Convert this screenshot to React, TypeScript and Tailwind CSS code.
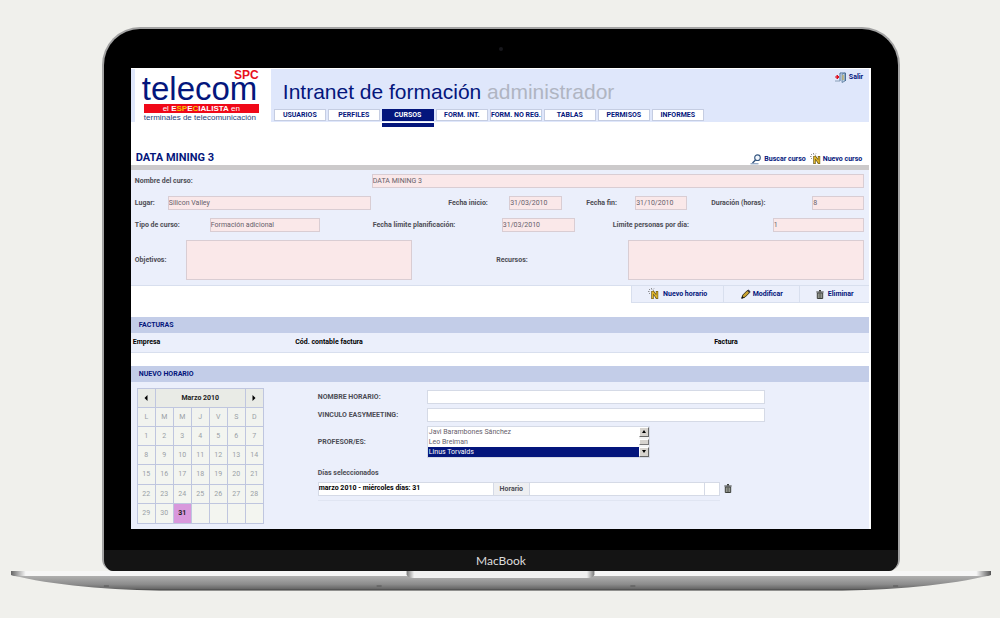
import type { ReactNode } from "react";
import clsx from "clsx";

const TABS = ["USUARIOS", "PERFILES", "CURSOS", "FORM. INT.", "FORM. NO REG.", "TABLAS", "PERMISOS", "INFORMES"];
const WEEKDAYS = ["L", "M", "M", "J", "V", "S", "D"];
const WEEKS = [0, 1, 2, 3, 4].map((w) => WEEKDAYS.map((_, d) => w * 7 + d + 1));
const TEACHERS = ["Javi Barambones Sánchez", "Leo Breiman", "Linus Torvalds"];

/* ---------- icons ---------- */

function ExitIcon() {
  return (
    <svg viewBox="0 0 12 11" className="w-3 h-[11px]" aria-hidden="true">
      <path d="M5 9V1h5.500v8" fill="#dfeaf8" stroke="#4a6f96" />
      <path d="M7 2l3-1v8l-3 1.500z" fill="#b9cfe0" stroke="#4a6f96" strokeWidth=".7" />
      <path d="M8 3v5" stroke="#c8a63c" />
      <path d="M0 5h2.500M2 3l2 2-2 2z" fill="#e01020" stroke="#e01020" />
      <path d="M0 9h5" stroke="#8aa0b8" />
    </svg>
  );
}

function SearchIcon() {
  return (
    <svg viewBox="0 0 12 11" className="w-3 h-[11px]" aria-hidden="true">
      <circle cx="7.500" cy="3.700" r="2.800" fill="#f2f7fd" stroke="#34557f" strokeWidth="1.100" />
      <path d="M5.500 6L2.500 9" stroke="#34557f" strokeWidth="1.500" />
      <path d="M.5 9.800h8" stroke="#6c88ae" />
    </svg>
  );
}

function NewIcon() {
  return (
    <svg viewBox="0 0 11 12" className="w-[11px] h-3" aria-hidden="true">
      <path d="M4.500 11V3M9 11V3M4.500 3L9 10" fill="none" stroke="#5b4a10" strokeWidth="2.400" />
      <path d="M4.500 10.500V3.500M9 10.500V3.500M4.500 3.500L9 9.500" fill="none" stroke="#e0b62c" strokeWidth="1.300" />
      <path d="M0 3.500h1.500M1 1l1 1M3.500 0v1.500M6 .5L5 1.500M1 6l1-1" stroke="#666" strokeWidth=".7" />
    </svg>
  );
}

function PencilIcon() {
  return (
    <svg viewBox="0 0 10 10" className="size-[10px]" aria-hidden="true">
      <path d="M.8 9.200l1-3.200L6.500 1.300l2.200 2.200L4 8.200z" fill="#c9a22e" stroke="#2f2a18" strokeWidth=".9" />
      <path d="M6 1.800L7.500.500l2 2-1.300 1.500z" fill="#3b3b48" />
      <path d="M.3 9.700l.9-2.700 1.800 1.800z" fill="#111" />
    </svg>
  );
}

function TrashIcon() {
  return (
    <svg viewBox="0 0 8 9" className="w-2 h-[9px]" aria-hidden="true">
      <path d="M3 .600h2M.3 2h7.400" stroke="#3c3f3a" strokeWidth="1.100" />
      <path d="M1.300 3h5.400v5.500H1.300z" fill="#a9aca4" stroke="#3c3f3a" />
      <path d="M3.200 3.500v4.500M4.800 3.500v4.500" stroke="#3c3f3a" strokeWidth=".7" />
    </svg>
  );
}

/* ---------- form pieces ---------- */

function Label({ id, className, children }: { id: string; className?: string; children: ReactNode }) {
  return (
    <label htmlFor={id} className={clsx("whitespace-nowrap font-bold text-[#4d4d55]", className)}>
      {children}
    </label>
  );
}

function Field({ id, value }: { id: string; value: string }) {
  return (
    <input
      id={id}
      defaultValue={value}
      className="w-full min-w-0 h-3.5 pb-px border border-[#d9cdd3] bg-[#fae8e9] text-[#66606a]"
    />
  );
}

function Area({ id }: { id: string }) {
  return <textarea id={id} className="block w-full min-w-0 h-10 resize-none border border-[#d9cdd3] bg-[#fae8e9]" />;
}

function SectionTitle({ children }: { children: ReactNode }) {
  return <h2 className="h-4 pl-2 bg-[#c3cde8] font-bold leading-4 text-[#04167c]">{children}</h2>;
}

/* ---------- page blocks ---------- */

function Logo() {
  return (
    <div className="w-[136px] h-[53px] shrink-0 bg-white pl-[7px] pr-3 font-['Liberation_Sans',sans-serif]">
      <p className="h-2.5 text-right text-[12px] leading-[12px] font-bold text-[#e8101c]">SPC</p>
      <p className="h-[25px] text-[33px] leading-[20px] text-[#04167c]">telecom</p>
      <p className="ml-0.5 h-[9px] bg-[#f00818] text-center text-[8px] leading-[9px] text-white">
        el <b>E</b>
        <b className="text-[#f5c400]">SP</b>
        <b>E</b>
        <b className="text-[#f5c400]">C</b>
        <b>IALISTA</b> en
      </p>
      <p className="ml-0.5 whitespace-nowrap text-[8px] leading-[9px] text-[#1c3f7c]">
        terminales de telecomunicación
      </p>
    </div>
  );
}

function Header() {
  return (
    <header className="flex h-[54px] border-t border-white bg-[#dfe7fb] pl-1">
      <Logo />
      <div className="flex min-w-0 flex-1 flex-col justify-between pl-[3px] pr-1.5">
        <div className="flex justify-between">
          <h1 className="pt-[11px] pl-[9px] whitespace-nowrap text-[21px] leading-6 text-[#04167c] font-['Liberation_Sans',sans-serif]">
            Intranet de formación <span className="text-[#b0b5c2]">administrador</span>
          </h1>
          <a href="#salir" className="flex h-4 items-center gap-0.5 font-bold text-[#04167c]">
            <ExitIcon />
            Salir
          </a>
        </div>
        <nav className="flex gap-0.5 pb-px">
          {TABS.map((tab) => (
            <a
              key={tab}
              href="#tab"
              className={clsx(
                "relative h-3 w-[52px] whitespace-nowrap border text-center font-bold leading-[10px]",
                tab === "CURSOS"
                  ? "border-[#04167c] bg-[#04167c] text-white after:absolute after:-inset-x-px after:top-[13px] after:h-1 after:bg-[#04167c]"
                  : "border-[#c5cde2] bg-white text-[#04167c]",
              )}
            >
              {tab}
            </a>
          ))}
        </nav>
      </div>
    </header>
  );
}

function CourseForm() {
  return (
    <section>
      <div className="flex h-12 items-end justify-between border-b-[5px] border-[#cccacb] pl-[5px] pr-[7px] font-bold text-[#04167c]">
        <h2 className="text-[11px] leading-[14px]">DATA MINING 3</h2>
        <div className="flex gap-1">
          <a href="#buscar" className="flex items-center gap-0.5 leading-3">
            <SearchIcon />
            Buscar curso
          </a>
          <a href="#nuevo" className="flex items-center gap-0.5 leading-3">
            <NewIcon />
            Nuevo curso
          </a>
        </div>
      </div>

      <form className="flex flex-col gap-2 border-b border-[#d8dfee] bg-[#ebeffb] pt-1 pb-[5px] pl-1 pr-[5px]">
        <div className="grid grid-cols-[237px_1fr] items-center">
          <Label id="nombre">Nombre del curso:</Label>
          <Field id="nombre" value="DATA MINING 3" />
        </div>
        <div className="grid grid-cols-[33px_1fr_138px_53px_73px_52px_125px_52px] items-center">
          <Label id="lugar">Lugar:</Label>
          <Field id="lugar" value="Silicon Valley" />
          <Label id="inicio" className="pl-[77px]">Fecha inicio:</Label>
          <Field id="inicio" value="31/03/2010" />
          <Label id="fin" className="pl-6">Fecha fin:</Label>
          <Field id="fin" value="31/10/2010" />
          <Label id="duracion" className="pl-6">Duración (horas):</Label>
          <Field id="duracion" value="8" />
        </div>
        <div className="grid grid-cols-[75px_110px_182px_73px_198px_1fr] items-center">
          <Label id="tipo">Tipo de curso:</Label>
          <Field id="tipo" value="Formación adicional" />
          <Label id="planificacion" className="pl-[53px]">Fecha límite planificación:</Label>
          <Field id="planificacion" value="31/03/2010" />
          <Label id="limite" className="pl-[38px]">Límite personas por día:</Label>
          <Field id="limite" value="1" />
        </div>
        <div className="grid grid-cols-[51px_1fr_216px_236px] items-center">
          <Label id="objetivos">Objetivos:</Label>
          <Area id="objetivos" />
          <Label id="recursos" className="pl-[84px]">Recursos:</Label>
          <Area id="recursos" />
        </div>
      </form>

      <div className="flex h-[17px] justify-end font-bold text-[#04167c]">
        <button className="flex w-[93px] items-center justify-center gap-1 border border-t-0 border-[#d8dfee] bg-[#ebeffb]">
          <NewIcon />
          Nuevo horario
        </button>
        <button className="flex w-[76px] items-center justify-center gap-0.5 border-r border-b border-[#d8dfee] bg-[#ebeffb]">
          <PencilIcon />
          Modificar
        </button>
        <button className="flex w-[69px] items-center justify-center gap-1 border-b border-[#d8dfee] bg-[#ebeffb]">
          <TrashIcon />
          Eliminar
        </button>
      </div>
    </section>
  );
}

function Invoices() {
  return (
    <section className="mt-3.5">
      <SectionTitle>FACTURAS</SectionTitle>
      <table className="w-full table-fixed border-b border-[#d8dfee] bg-[#ebeffb] text-left text-black">
        <thead>
          <tr className="h-[19px]">
            <th className="w-[22%] pl-0.5">Empresa</th>
            <th className="pl-0.5">Cód. contable factura</th>
            <th className="w-[21%]">Factura</th>
          </tr>
        </thead>
      </table>
    </section>
  );
}

function Calendar() {
  return (
    <table className="h-[136px] w-[127px] shrink-0 table-fixed border-collapse text-center text-[#9a9fa6]">
      <thead>
        <tr className="h-[19px] bg-[#e9ebe6] text-[#222]">
          <th className="border border-[#bfc6df]">
            <button aria-label="Mes anterior" className="block w-full">
              <svg viewBox="0 0 4 6" className="mx-auto h-1.5 w-1"><path d="M3.500 0v6L.5 3z" /></svg>
            </button>
          </th>
          <th colSpan={5} className="border border-[#bfc6df]">Marzo 2010</th>
          <th className="border border-[#bfc6df]">
            <button aria-label="Mes siguiente" className="block w-full">
              <svg viewBox="0 0 4 6" className="mx-auto h-1.5 w-1"><path d="M.5 0v6l3-3z" /></svg>
            </button>
          </th>
        </tr>
        <tr className="h-[19px] bg-[#f1f3ef]">
          {WEEKDAYS.map((d, i) => (
            <th key={i} className="border border-[#bfc6df] font-normal">{d}</th>
          ))}
        </tr>
      </thead>
      <tbody>
        {WEEKS.map((week) => (
          <tr key={week[0]} className="h-[19px] bg-[#f3f5f0]">
            {week.map((day) => (
              <td
                key={day}
                className={clsx("border border-[#bfc6df]", day === 31 && "bg-[#d898dc] font-bold text-[#222]")}
              >
                {day <= 31 ? day : ""}
              </td>
            ))}
          </tr>
        ))}
      </tbody>
    </table>
  );
}

function ScheduleForm() {
  return (
    <form className="w-[447px]">
      <div className="grid grid-cols-[109px_1fr] items-center gap-y-1">
        <Label id="horario">NOMBRE HORARIO:</Label>
        <input id="horario" className="h-3.5 border border-[#d5dae6] bg-white" />
        <Label id="easymeeting">VINCULO EASYMEETING:</Label>
        <input id="easymeeting" className="h-3.5 border border-[#d5dae6] bg-white" />
        <Label id="profesores">PROFESOR/ES:</Label>
        <div className="flex h-8 w-[223px] border border-[#d5dae6] bg-white">
          <select
            id="profesores"
            size={3}
            defaultValue="Linus Torvalds"
            className="h-[30px] flex-1 appearance-none overflow-hidden text-[#66606a] [scrollbar-width:none]"
          >
            {TEACHERS.map((t) => (
              <option
                key={t}
                className="h-[10px] min-h-0 p-0 pl-px pt-px leading-[10px] checked:bg-[#04167c] checked:bg-[linear-gradient(#04167c,#04167c)] checked:text-white"
              >
                {t}
              </option>
            ))}
          </select>
          <div className="flex w-[10px] flex-col justify-between bg-[#f4f4f4]">
            <button type="button" aria-label="Subir" className="h-[10px] border border-t-white border-l-white border-r-[#666] border-b-[#666] bg-[#d6d3ce]">
              <svg viewBox="0 0 4 3" className="mx-auto h-[3px] w-1"><path d="M0 3h4L2 0z" /></svg>
            </button>
            <span className="h-1.5 border border-t-white border-l-white border-r-[#777] border-b-[#777] bg-[#d6d3ce]" />
            <button type="button" aria-label="Bajar" className="h-[10px] border border-t-white border-l-white border-r-[#666] border-b-[#666] bg-[#d6d3ce]">
              <svg viewBox="0 0 4 3" className="mx-auto h-[3px] w-1"><path d="M0 0h4L2 3z" /></svg>
            </button>
          </div>
        </div>
      </div>

      <Label id="dias" className="mt-2.5 block leading-[10px]">Días seleccionados</Label>
      <div className="mt-1 flex items-start gap-1">
        <div className="flex w-[402px] border-b border-[#e0e5f2] pb-1">
          <input
            id="dias"
            defaultValue="marzo 2010 - miércoles días: 31"
            className="h-3.5 w-[176px] border border-[#d5dae6] bg-white pb-px font-bold text-black"
          />
          <label htmlFor="horas" className="h-3.5 w-[35px] border-y border-[#d5dae6] bg-[#eeeff2] text-center font-bold leading-3 text-[#4d4d55]">
            Horario
          </label>
          <input id="horas" className="h-3.5 min-w-0 flex-1 border border-[#d5dae6] bg-white" />
          <input aria-label="Aula" className="h-3.5 w-[15px] border border-l-0 border-[#d5dae6] bg-white" />
        </div>
        <button type="button" aria-label="Eliminar día" className="pt-0.5">
          <TrashIcon />
        </button>
      </div>
    </form>
  );
}

function LaptopBase() {
  return (
    <svg viewBox="0 0 981 20" preserveAspectRatio="none" className="block h-5 w-full" aria-hidden="true">
      <defs>
        <linearGradient id="under" x1="0" y1="0" x2="0" y2="1">
          <stop offset="0" stopColor="#b4b4b4" />
          <stop offset=".6" stopColor="#8c8c8c" />
          <stop offset=".9" stopColor="#666" />
          <stop offset="1" stopColor="#333" />
        </linearGradient>
        <linearGradient id="edge" x1="0" y1="0" x2="1" y2="0">
          <stop offset="0" stopColor="#666" />
          <stop offset=".015" stopColor="#f6f6f6" />
          <stop offset=".985" stopColor="#f6f6f6" />
          <stop offset="1" stopColor="#555" />
        </linearGradient>
        <linearGradient id="notch" x1="0" y1="0" x2="1" y2="0">
          <stop offset="0" stopColor="#777" />
          <stop offset=".04" stopColor="#f0f0f0" />
          <stop offset=".96" stopColor="#f0f0f0" />
          <stop offset="1" stopColor="#777" />
        </linearGradient>
      </defs>
      <path d="M0 4C40 14 100 19.500 160 19.500H821C881 19.500 941 14 981 4z" fill="url(#under)" />
      <path d="M0 0H981V4Q977 6 970 5H11Q4 6 0 4z" fill="url(#edge)" />
      <path d="M396 0H584V4Q582 7 578 7H402Q398 7 396 4z" fill="url(#notch)" />
      <path d="M93 15h5M366 15h5M620 15h5M883 15h5" stroke="#555" />
    </svg>
  );
}

export default function App() {
  return (
    <main className="min-h-screen bg-[#f0f0ec] pt-[27px] pl-0.5 text-[7px] leading-[10px] font-['Roboto',sans-serif]">
      <div className="mx-auto w-4/5 overflow-hidden rounded-t-[38px] rounded-b-xl border-2 border-b-0 border-[#a3a3a3] bg-black">
        <div className="flex h-[39px] items-center justify-center">
          <span className="size-1 rounded-full bg-[#17171c]" />
        </div>
        <div className="mx-[27px] bg-white pr-0.5">
          <Header />
          <CourseForm />
          <Invoices />
          <section className="mt-[13px]">
            <SectionTitle>NUEVO HORARIO</SectionTitle>
            <div className="flex gap-[54px] bg-[#ebeffb] pt-1.5 pb-[5px] pl-1.5">
              <Calendar />
              <div className="pt-0.5">
                <ScheduleForm />
              </div>
            </div>
          </section>
        </div>
        <div className="h-[21px]" />
        <p className="h-[21px] bg-[#141414] text-center text-[12px] leading-[21px] text-[#dcdcdc] font-['Lato',sans-serif]">
          MacBook
        </p>
      </div>
      <div className="mx-[9px]">
        <LaptopBase />
      </div>
    </main>
  );
}
